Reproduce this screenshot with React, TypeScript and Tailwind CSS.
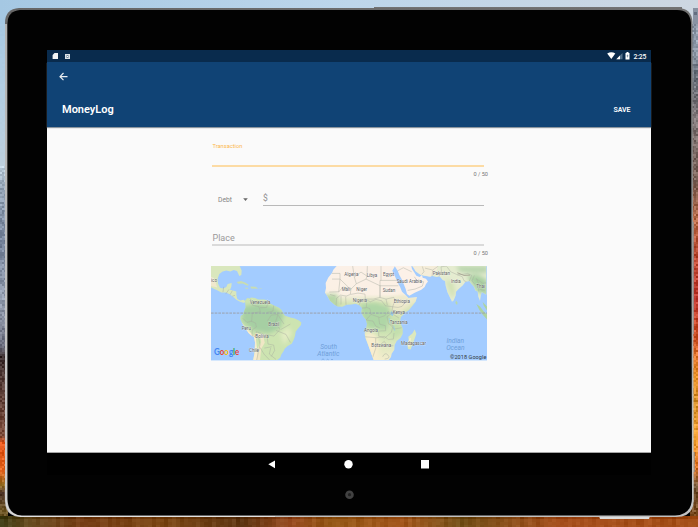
import React from "react";

type Stop = [number, number, number, number];

const LEFT: Stop[] = [
  [0, 164, 199, 226], [90, 178, 205, 226], [165, 190, 208, 222], [185, 152, 168, 186], [240, 120, 134, 158],
  [300, 150, 160, 178], [345, 105, 108, 125], [356, 56, 42, 42], [385, 92, 66, 60], [435, 120, 72, 55],
  [442, 232, 88, 28], [470, 226, 100, 30], [484, 150, 110, 36], [492, 84, 58, 46], [510, 112, 88, 38], [527, 80, 65, 30],
];
const RIGHT: Stop[] = [
  [0, 205, 215, 225], [8, 140, 150, 165], [40, 150, 162, 178], [75, 105, 112, 122], [115, 130, 122, 124],
  [180, 120, 95, 85], [220, 185, 105, 70], [260, 190, 72, 50], [300, 190, 55, 45], [340, 215, 92, 45],
  [375, 235, 145, 40], [400, 215, 145, 45], [440, 245, 160, 50], [465, 225, 115, 35], [485, 110, 80, 50], [527, 130, 75, 25],
];
const BOTTOM: Stop[] = [
  [0, 68, 66, 26], [25, 100, 74, 30], [80, 120, 64, 24], [160, 125, 72, 22], [240, 95, 55, 20],
  [290, 155, 78, 35], [330, 145, 85, 20], [400, 165, 88, 30], [460, 115, 80, 25], [560, 165, 78, 28], [698, 165, 80, 25],
];

function noise(a: number, b: number) {
  const s = Math.sin(a * 127.1 + b * 311.7) * 43758.5453;
  return s - Math.floor(s);
}

function tone(stops: Stop[], at: number, jitter: number) {
  let i = 0;
  while (i < stops.length - 2 && stops[i + 1][0] < at) i++;
  const a = stops[i];
  const b = stops[i + 1];
  const t = Math.min(1, Math.max(0, (at - a[0]) / (b[0] - a[0])));
  const c = [1, 2, 3].map((k) => Math.max(0, Math.min(255, Math.round(a[k] + (b[k] - a[k]) * t + jitter))));
  return `rgb(${c[0]},${c[1]},${c[2]})`;
}

function Wallpaper() {
  const cells: React.ReactElement[] = [];
  for (let y = 0; y < 527; y += 2) {
    for (let x = 0; x < 8; x += 2) {
      const l = y < 165 ? 2 : 50;
      const r = y < 8 ? 3 : 60;
      cells.push(<rect key={`l${x}-${y}`} x={x} y={y} width="2" height="2" fill={tone(LEFT, y, (noise(x, y) - 0.5) * l)} />);
      cells.push(<rect key={`r${x}-${y}`} x={690 + x} y={y} width="2" height="2" fill={tone(RIGHT, y, (noise(x + 9, y) - 0.5) * r)} />);
    }
  }
  for (let x = 0; x < 698; x += 4) {
    for (let y = 516; y < 527; y += 3) {
      cells.push(
        <rect key={`b${x}-${y}`} x={x} y={y} width="4" height="3" fill={tone(BOTTOM, x, (noise(x, 5) - 0.5) * 16 + (noise(x, y) - 0.5) * 8 - (y < 519 ? 18 : 0))} />
      );
    }
  }
  return (
    <svg className="absolute inset-0" width="698" height="527" shapeRendering="crispEdges">
      <defs>
        <linearGradient id="sky">
          <stop offset="0" stopColor="#a5c8e3" />
          <stop offset=".5" stopColor="#bdd6eb" />
          <stop offset="1" stopColor="#cdd7e1" />
        </linearGradient>
        <linearGradient id="rim" x1="0" y1="0" x2=".15" y2="1">
          <stop offset="0" stopColor="#666" />
          <stop offset=".4" stopColor="#858585" />
          <stop offset="1" stopColor="#c2c2c2" />
        </linearGradient>
      </defs>
      {cells}
      <rect width="698" height="24" fill="url(#sky)" />
      <rect x="693" y="8" width="5" height="16" fill="#8993a3" />
      <rect x="694" y="12" width="3" height="3" fill="#636e80" />
      <g shapeRendering="geometricPrecision">
        <path d="M692 222h1.8v112h-1.8zM693.5 452h1.2v20h-1.2z" fill="#8c8c8c" />
        <path d="M599 516h51l-1 3h-49z" fill="#dcdcdc" />
        <path d="M374 7h308v2H374z" fill="#737373" />
        <path d="M19 8H678Q691.500 8 692.500 22L693.800 501Q693 517 676 517H20Q5 516 5 501V23Q5 9 19 8z" fill="url(#rim)" />
        <path d="M6 24V500Q7 515.500 21 516" fill="none" stroke="#dadada" strokeWidth="1.300" />
        <path d="M20 516.500H275" stroke="#e2e2e2" />
        <path d="M20 10H677Q690 10 691 23L692 499Q691 515 675 515.500H22Q8 515 7.500 499V23Q8 11 20 10z" fill="#020202" />
      </g>
    </svg>
  );
}

function StatusBar() {
  return (
    <div className="flex h-3 items-center bg-[#092b4d] text-white">
      <svg className="ml-[5px]" width="7" height="8" viewBox="0 0 7 8" fill="#f2f5f7">
        <path d="M2.500 1h3.500v6H.6V3z" />
      </svg>
      <svg className="ml-1.5" width="6" height="7" viewBox="0 0 6 7">
        <path d="M0 1h5v5H0z" fill="#dbe1e6" />
        <path d="M1.500 2h2v3h-2z" fill="#6f869a" />
        <path d="M2 3h1v1H2z" fill="#fff" />
      </svg>
      <svg className="ml-auto" width="25" height="10" viewBox="0 0 25 10">
        <path d="M.2 2.600Q4.300-.1 8.300 2.600L4.300 8z" fill="#fff" />
        <path d="M9.300 8.300L15.500 2v6.300z" fill="#547089" />
        <path d="M9.300 8.300L13 4.400v3.900z" fill="#fff" />
        <path d="M19.500 1h2v.9h1v6.500h-4V1.900h1z" fill="#fff" />
        <path d="M20.500 3l-1 2.300h.9V7l1.100-2.400h-1z" fill="#587188" />
      </svg>
      <span className="ml-0.5 mr-[3.500px] w-[14px] whitespace-nowrap pt-px text-[6.800px] font-medium leading-3 tracking-[-0.2px]">2:25</span>
    </div>
  );
}

function AppBar() {
  return (
    <header className="relative flex h-[65px] flex-col bg-[#104375] text-white shadow-[0_1px_1px_#8b959e]">
      <svg className="ml-3 mt-2.5" width="9" height="9" viewBox="0 0 9 9" fill="none" stroke="#e8edf1" strokeWidth="1.200">
        <path d="M8.500 4.700H1M4.500 1L1 4.700l3.500 3.500" />
      </svg>
      <div className="mt-[19px] flex h-5 items-center justify-between pl-[15px] pr-5">
        <h1 className="text-[11px] font-semibold leading-5">MoneyLog</h1>
        <button className="w-[18px] text-[7px] font-semibold leading-5">SAVE</button>
      </div>
    </header>
  );
}

const SA = "M120 122L127 114 134 115 138 112 150 114 160 118 178 118 191 122 196 130 207 136 222 143 229 149 235 160 240 167 256 172 269 175 282 181 289 187 288 195 279 205 272 215 270 228 266 240 260 251 248 258 239 266 236 273 229 283 226 292 217 300H145L149 275 150 247 148 232 136 224 130 218 120 202 112 190 106 177 107 168 114 163 118 151 122 142z";
const NA = "M18 18H104L110 31 109 45 103 48 96 33 86 30 76 34 64 31 53 34 43 42 38 55 39 70 45 83 55 85 64 81 68 72 80 69 79 80 75 89 86 92 94 94 94 105 97 117 106 121 116 119 121 124 117 129 105 125 94 119 84 110 75 103 63 97 49 97 38 91 18 82z";
const AFRICA = "M-25 18L-35 29-39 39-50 52-58 69-57 84-60 98-52 109-45 122-32 133-22 139-8 140 5 134 19 133 32 131 44 136 51 144 49 157 55 169 63 179 66 192 63 207 59 221 62 235 69 253 75 270 81 286 86 300H131L138 291 140 281 148 269 149 255 155 243 167 233 173 221 173 205 168 193 165 183 168 171 180 158 192 150 204 135 212 124 216 111 205 112 190 114 183 106 171 95 165 80 158 68 153 56 147 42 142 32 150 18z";
const ARABIA = "M149 18L158 32 163 45 171 59 176 72 182 87 186 102 193 107 209 98 229 89 239 81 243 72 249 64 243 56 233 53 231 45 224 51 214 47 208 37 201 27 199 18z";
const ASIA = "M202 18L208 24 212 34 225 43 236 47 252 49 263 48 274 51 284 49 293 60 300 63 302 77 307 96 314 111 321 125 326 121 332 106 333 95 341 87 353 76 361 66 373 63 378 70 387 80 391 91 398 94 400 110 405 123 407 109 410 96 418 100 424 104V18z";

const boundary = { fill: "none", stroke: "#a6aaa0", strokeWidth: 1.3 };

function WorldMap() {
  return (
    <svg className="block" width="276" height="94.500" viewBox="0 0 828 283" fontFamily="Roboto, sans-serif">
      <defs>
        <filter id="soften" x="-20%" y="-20%" width="140%" height="140%">
          <feGaussianBlur stdDeviation="7" />
        </filter>
        <clipPath id="america"><path d={SA} /></clipPath>
        <clipPath id="africa"><path d={AFRICA} /></clipPath>
        <clipPath id="asia"><path d={ASIA} /></clipPath>
        <linearGradient id="africaTone" x1="0" y1="0" x2="0" y2="1">
          <stop offset="0" stopColor="#fbf0e7" />
          <stop offset=".3" stopColor="#fbf0e4" />
          <stop offset=".4" stopColor="#d5e3b5" />
          <stop offset=".7" stopColor="#cde3b3" />
          <stop offset="1" stopColor="#f3edcd" />
        </linearGradient>
      </defs>
      <rect width="828" height="283" fill="#a3ccff" />
      <g transform="translate(-18 -18)">
        <path d={NA} fill="#d9e7bd" />
        <path d="M18 50l9 4 10 28-19-4z" fill="#f0e8cd" />
        <path d="M95 66l13-3 14 5 10 7-5 2-14-7-13 1zM136 79l16 1 8 6-22-1zM121 83h8v3h-8zM163 85h7v2h-7z" fill="#c8ddb2" />
        <path d={SA} fill="#cde4b1" />
        <g clipPath="url(#america)" filter="url(#soften)">
          <path d="M112 140l45-10 50 10 30 20-12 45-35 15-45-8-35-30z" fill="#a6cfa3" />
          <path d="M225 220l25-20 12 20-25 35z" fill="#e2ecc3" />
        </g>
        <g clipPath="url(#america)">
          <path d="M105 185q15 36 45 45l8 70h-14l3-68z" fill="#f7eccf" stroke="#f7eccf" strokeWidth="4" />
          <path d="M150 223l20 6 4 18-10 17-4 36" fill="none" stroke="#f0e7c5" strokeWidth="10" />
          <path {...boundary} d="M136 116l6 19 20 5 4 15-24 4-2 24-14 4-12-12M190 122l-5 20-20 1M206 136l-2 17-18 4M138 183l14 6 2 12-12 8-1 17 10 4 3-15 19 6 14 12 2 19 17 3 3 16-10 18M160 228l5 25-10 47M178 264l22-4M165 262l12 20 17 18M197 264l-4 18 20 16M187 183l12-18 20-2-8 24 14 21-18 20-27-5M220 166l17 26M213 211l30 12 13 24M228 208l28-16" />
        </g>
        <path {...boundary} d="M54 96l2-16M72 88l-10 14M82 92l-7 12M90 106l-8 2" />
      </g>
      <g transform="translate(402 -18)">
        <path d={AFRICA} fill="url(#africaTone)" />
        <g clipPath="url(#africa)" filter="url(#soften)">
          <path d="M47 132l42-5 43 12 5 29-12 42-57-6-20-44z" fill="#afd6a6" />
          <path d="M-64 103l41-2 5 45-45-6z" fill="#b8d7a8" />
          <path d="M57 215l32 4 14 25-4 60H60z" fill="#f8edce" />
          <path d="M128 118l50-15 43 17-57 38-22-7z" fill="#eee9cc" />
          <path d="M143 172l17 5 10 40-30 25z" fill="#c3dfad" />
        </g>
        <g clipPath="url(#africa)">
          <path {...boundary} d="M-39 40h24v17l32 31 17-17-6-20-5-33M-39 57h24l-4 38-28 1M-19 96l12-15 25 4-2 18-12 5-17-3-12 9-2 24M-45 103l16 5M-12 108v25M2 110l1 24M17 103l22-4 21 3 1 15-15 9-5 11M34 71l29-14 42 20v35l-20 5-23 0M28 51l20-15 18 12-3 9M66 48l1-30M108 18v43h-3v16h55M108 61h48M105 77v35l18 5 23-5 9 15M61 117l15 8 17-7 17 4 11 15 22 3 5-14M123 117l4 18M143 140l16 2 12-3 15-19M143 140l-3 20 22 14M50 144l14-1 1-16M65 142l10 4 3 17-15 17M78 163l26 9 15-5 12-14M101 172l3 20 17 5 1 15-21 1v15l18 6 20-17 4-16-9-8M140 160l-14 10 5 22 12 3 3 12 24-4M64 180l20 3 8 15 12 5M60 230l35 3 23-4M92 234v31l-9 27M118 229l12 9 15-1 2-18M92 250l13 4 13-10 9 13 18 0M113 290q7-15 16-5t-10 12" />
          <path d="M139 155l6 3-3 9-5-5zM132 174l3 15M146 197l3 15" fill="#8fc8f3" stroke="#8fc8f3" strokeWidth="2" />
        </g>
        <path d={ARABIA} fill="#fcf1e8" />
        <path {...boundary} d="M158 32l17-9 25 12M208 50l9 13 19 2-4 13-22 9-22 4" />
        <path d={ASIA} fill="#e5ecd0" />
        <path d="M202 18h77l-6 20-17 12-30-7-15-11z" fill="#f5edd9" />
        <g clipPath="url(#asia)" filter="url(#soften)">
          <path d="M333 18h95v20l-38 2-45-4z" fill="#b9d5ae" />
          <path d="M365 48l34-3 28 15v50l-17-10-15-6-13-22z" fill="#a8d0a1" />
          <path d="M300 59l23 4 8 35-10 19z" fill="#d2e1b4" />
        </g>
        <g clipPath="url(#asia)">
          <path {...boundary} d="M232 19l5 16-7 8M240 24l23 6 17-12M261 49l2-18M281 49l9-11-2-18 18-2M306 20l11 15 20 9 15-1 16-3M337 44l15 6 5 12 8 3M368 40l12 6-7 17M388 46l-7 16 9 11M394 56l8 16-1 22M394 56l20 14 10-2M405 88l14 3" />
          <path d="M337 38l20 8 18-1" fill="none" stroke="#aaa896" strokeWidth="3" />
        </g>
        <path d="M333 121l5 7-2 7-5-6z" fill="#bad9aa" />
        <path d="M209 208l5 13-4 12-8 21-5 14-8-1-2-14 4-14-1-9 12-10z" fill="#dce8bd" />
        <path d="M196 234l-5 26" stroke="#f5ecc9" strokeWidth="5" />
        <path d="M394 132l11 7 10 14 11 10v15l-12-13-10-14zM413 126l13 13v12l-10-15z" fill="#add3a1" />
      </g>
      <path d="M0 141H828" stroke="#9ba1ac" strokeWidth="3" strokeDasharray="8 3" />
      <g fontSize="13.500" fill="#5c5d5e" stroke="#fff" strokeWidth="2" strokeOpacity=".6" paintOrder="stroke">
        <text x="0" y="48">ico</text>
        <text x="116" y="113">Venezuela</text>
        <text x="172" y="181">Brazil</text>
        <text x="92" y="192">Peru</text>
        <text x="133" y="215">Bolivia</text>
        <text x="114" y="258">Chile</text>
        <text x="400" y="29">Algeria</text>
        <text x="467" y="34">Libya</text>
        <text x="516" y="29">Egypt</text>
        <text x="392" y="74">Mali</text>
        <text x="436" y="74">Niger</text>
        <text x="515" y="78">Sudan</text>
        <text x="425" y="109">Nigeria</text>
        <text x="548" y="112">Ethiopia</text>
        <text x="545" y="145">Kenya</text>
        <text x="536" y="173">Tanzania</text>
        <text x="459" y="198">Angola</text>
        <text x="481" y="244">Botswana</text>
        <text x="570" y="236">Madagascar</text>
        <text x="557" y="50">Saudi Arabia</text>
        <text x="665" y="26">Pakistan</text>
        <text x="720" y="52">India</text>
        <text x="796" y="65">Thai</text>
      </g>
      <g fontSize="20" fontStyle="italic" fill="#6f9fd9" textAnchor="middle">
        <text x="353" y="249">South</text>
        <text x="352" y="271">Atlantic</text>
        <text x="733" y="230">Indian</text>
        <text x="733" y="252">Ocean</text>
      </g>
      <path d="M332 281q4-5 8 0M347 281q3-3 6 0M360 281q3-3 6 0" fill="none" stroke="#6f9fd9" strokeWidth="2" />
      <text x="9" y="268" fontFamily="Lato, sans-serif" fontSize="28" fontWeight="700" textLength="76" lengthAdjust="spacingAndGlyphs"><tspan fill="#4285f4">G</tspan><tspan fill="#ea4335">o</tspan><tspan fill="#fbbc05">o</tspan><tspan fill="#4285f4">g</tspan><tspan fill="#34a853">l</tspan><tspan fill="#ea4335">e</tspan></text>
      <text x="717" y="278" fontSize="16.500" textLength="109" fill="#303840">©2018 Google</text>
    </svg>
  );
}

function Counter() {
  return <div className="h-2 w-[276px] text-right text-[5.600px] leading-2 text-[#777]">0 / 50</div>;
}

function LogForm() {
  return (
    <main className="flex h-[325px] flex-col bg-[#fafafa] pl-[165px] pt-[15px]">
      <label className="h-2 pl-[0.500px] text-[5.700px] leading-2 text-[#fbb94f]">Transaction</label>
      <div className="mt-[15px] h-[2px] w-[272px] bg-[#fcdba4]" />
      <div className="mt-[3px]"><Counter /></div>
      <div className="mt-[13px] flex h-[15px] w-[272px] items-start text-[#858585]">
        <span className="ml-[6px] w-[25px] pt-[2.500px] text-[6.700px] leading-3">Debt</span>
        <svg className="mt-[6.500px]" width="5" height="4" viewBox="0 0 5 4"><path d="M.2.300h4.600L2.500 2.900z" fill="#666" /></svg>
        <div className="ml-auto h-[15px] w-[221px] border-b border-[#b9b9b9] text-[8.500px] leading-[14px] text-[#909090]">$</div>
      </div>
      <div className="mt-[26px] h-[14px] w-[272px] border-b-2 border-[#dadada] pl-[0.500px] text-[9px] leading-3 text-[#999]">Place</div>
      <div className="mt-[3px]"><Counter /></div>
      <div className="-ml-px mt-[9px]"><WorldMap /></div>
    </main>
  );
}

export default function App() {
  return (
    <div className="relative h-[527px] w-[698px] overflow-hidden bg-black font-['Roboto',sans-serif]">
      <Wallpaper />
      <div className="relative flex flex-col items-center pl-[47px] pr-[47px] pt-[50px]">
        <section className="flex w-full flex-col">
          <StatusBar />
          <AppBar />
          <LogForm />
          <nav className="flex h-[23px] w-full justify-center gap-[68px] border-t border-[#a5a5a5] bg-black">
            <svg className="mt-[7px]" width="8" height="9" viewBox="0 0 8 9"><path d="M7 .5v7.700L.3 4.300z" fill="#fff" /></svg>
            <svg className="mt-[7px]" width="9" height="9" viewBox="0 0 9 9"><circle cx="4.500" cy="4.200" r="4.200" fill="#fff" /></svg>
            <svg className="mt-[7px]" width="9" height="9" viewBox="0 0 9 9"><path d="M0 0h8v8.500H0z" fill="#fff" /></svg>
          </nav>
        </section>
        <svg className="mt-[15px]" width="10" height="10" viewBox="0 0 10 10"><circle cx="5.500" cy="4.700" r="4.300" fill="#424242" /><circle cx="5.500" cy="4.700" r="1.600" fill="#222" /></svg>
      </div>
    </div>
  );
}
